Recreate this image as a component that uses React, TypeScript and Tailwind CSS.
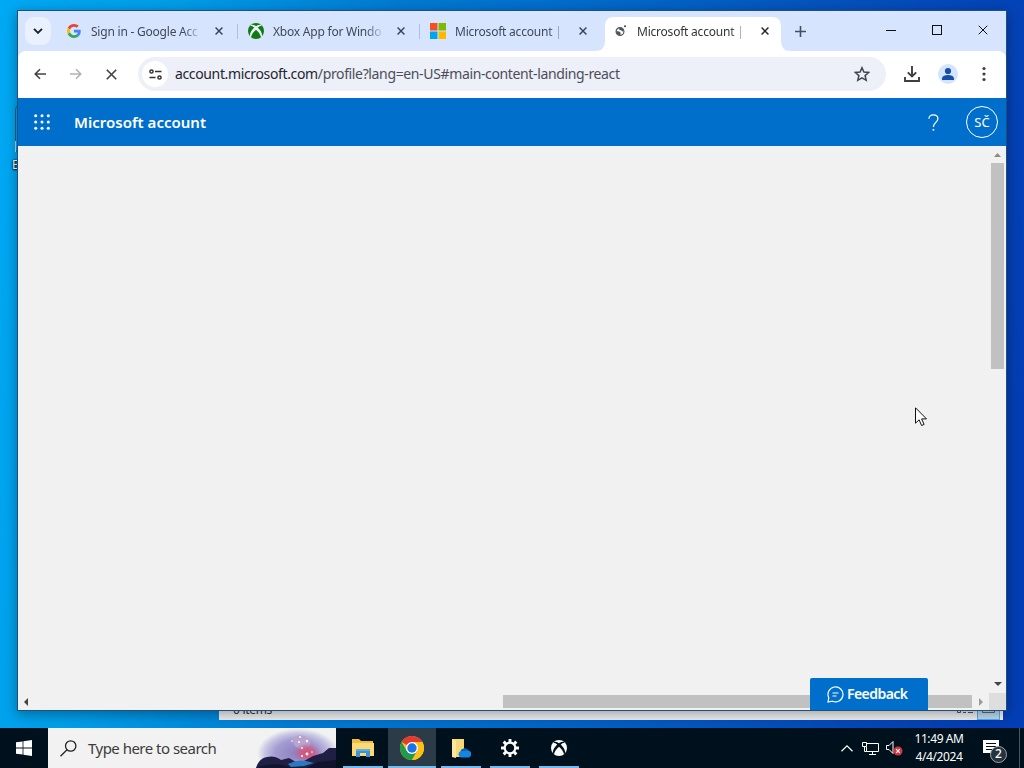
import React from "react";
import clsx from "clsx";

interface TabProps {
  title: string;
  icon: React.ReactNode;
  active?: boolean;
  separator?: boolean;
}

const GoogleIcon = () => (
  <svg width="14" height="14" viewBox="0 0 48 48">
    <path fill="#EA4335" d="M24 9.500c3.500 0 6.700 1.200 9.200 3.600l6.900-6.900C35.900 2.400 30.500 0 24 0 14.600 0 6.500 5.400 2.600 13.200l8 6.200C12.400 13.700 17.700 9.500 24 9.500z" />
    <path fill="#4285F4" d="M47 24.600c0-1.600-.2-3.100-.4-4.600H24v9h12.900c-.6 3-2.200 5.500-4.700 7.200l7.700 6C44.400 38 47 31.800 47 24.600z" />
    <path fill="#FBBC05" d="M10.500 28.600c-.5-1.500-.8-3-.8-4.600s.3-3.100.8-4.600l-8-6.200C.9 16.500 0 20.100 0 24s.9 7.500 2.600 10.800l7.900-6.200z" />
    <path fill="#34A853" d="M24 48c6.500 0 11.900-2.100 15.900-5.800l-7.700-6c-2.200 1.500-4.900 2.300-8.200 2.300-6.300 0-11.600-4.200-13.500-9.900l-7.900 6.200C6.500 42.600 14.600 48 24 48z" />
  </svg>
);

const XboxIcon = ({ size, ball, cross }: { size: number; ball: string; cross: string }) => (
  <svg width={size} height={size} viewBox="0 0 16 16">
    <circle cx="8" cy="8" r="8" fill={ball} />
    <path
      d="M3 1.800C5 1.200 6.800 2.300 8 3.200c1.200-.9 3-2 5-1.400l.8.900c-1.300-.3-2.900.8-4 1.900 2.300 2.300 4.700 5.500 4.200 8.800l-1 .9C12.600 11.500 10 8.300 8 6.700c-2 1.600-4.600 4.800-5 7.600l-1-.9c-.5-3.300 1.900-6.500 4.200-8.800-1.100-1.100-2.700-2.200-4-1.900z"
      fill={cross}
    />
  </svg>
);

const MicrosoftIcon = () => (
  <svg width="16" height="16" viewBox="0 0 16 16">
    <path fill="#f25022" d="M0 0h7.500v7.500H0z" />
    <path fill="#7fba00" d="M8.500 0H16v7.500H8.500z" />
    <path fill="#00a4ef" d="M0 8.500h7.500V16H0z" />
    <path fill="#ffb900" d="M8.500 8.500H16V16H8.500z" />
  </svg>
);

const GlobeIcon = () => (
  <svg width="16" height="16" viewBox="0 0 16 16">
    <circle cx="8" cy="8.500" r="3.900" fill="#fff" stroke="#50565c" strokeWidth="1.200" />
    <path d="M4.300 8l3 .6 1.500 1.400-.6 2.200C5.500 12 4 10.500 4.300 8zM7 4.800l3.300.2 1.500 2.700-1.700.9-1-1.300-1.700-.4z" fill="#50565c" />
    <circle cx="13" cy="3.300" r="1" fill="#3c4043" />
  </svg>
);

const Cross = ({ size, width, color }: { size: number; width: number; color: string }) => (
  <svg width={size} height={size} viewBox="0 0 10 10" stroke={color} strokeWidth={width}>
    <path d="M.7.7l8.600 8.600M9.300.7L.7 9.300" />
  </svg>
);

const Tab: React.FC<TabProps> = ({ title, icon, active, separator }) => {
  return (
    <div className="relative flex h-[34px] w-[182px] shrink-0 items-start">
      {active && (
        <svg className="absolute top-0 -left-[7px]" width="198" height="34">
          <path d="M0 34q10 0 10-10V9q0-9 9-9h158q9 0 9 9v15q0 10 10 10z" fill="#fff" />
        </svg>
      )}
      <div className="relative flex h-[28px] w-full items-center pl-[10px]">
        <span className="flex w-[16px] items-center justify-center">{icon}</span>
        <span
          className={clsx(
            "ml-[9px] w-[110px] whitespace-nowrap pt-[2px] text-[12px] tracking-[-0.22px] [mask-image:linear-gradient(to_right,black_84%,rgba(0,0,0,0.1))]",
            active ? "text-[#30343c]" : "text-[#41485a]"
          )}
        >
          {title}
        </span>
        <span className="ml-[14px]">
          <Cross size={8} width={1.800} color={active ? "#24262b" : "#3c4356"} />
        </span>
      </div>
      {separator && <span className="absolute top-[7px] right-0 h-[15px] w-px bg-[#abc0e8]" />}
    </div>
  );
};

const TabStrip = () => (
  <div className="flex h-[40px] items-start bg-[#d7e4fd] pt-[6px] pl-[7px]">
    <button className="flex h-[28px] w-[26px] items-center justify-center rounded-[9px] bg-[#e9f0fe]">
      <svg width="10" height="6" viewBox="0 0 10 6" fill="none" stroke="#1f2024" strokeWidth="1.900">
        <path d="M1 .8l4 4 4-4" />
      </svg>
    </button>
    <div className="ml-[5px] flex">
      <Tab title="Sign in - Google Acc" icon={<GoogleIcon />} separator />
      <Tab title="Xbox App for Windo" icon={<XboxIcon size={16} ball="#107c10" cross="#eef4ff" />} separator />
      <Tab title="Microsoft account | D" icon={<MicrosoftIcon />} />
      <Tab title="Microsoft account | Y" icon={<GlobeIcon />} active />
    </div>
    <svg className="mt-[9px] ml-[11px] shrink-0" width="11" height="11" stroke="#474e60" strokeWidth="1.600">
      <path d="M5.500 0v11M0 5.500h11" />
    </svg>
    <div className="mr-[18px] ml-auto flex items-start gap-[36px] pt-[8px]">
      <svg width="10" height="10" stroke="#111">
        <path d="M0 5.500h10" />
      </svg>
      <svg width="10" height="10" stroke="#111" fill="none">
        <rect x=".5" y=".5" width="9" height="9" />
      </svg>
      <Cross size={10} width={1} color="#111" />
    </div>
  </div>
);

const Toolbar = () => (
  <div className="bg-[#d7e4fd]">
    <div className="flex h-[47px] items-center rounded-t-[8px] bg-white pb-px pl-[16px]">
      <svg width="12" height="12" viewBox="0 0 13 12" fill="none" stroke="#404347" strokeWidth="1.700">
        <path d="M13 6H1.500M6.500 .8L1.300 6l5.200 5.200" />
      </svg>
      <svg className="ml-[24px]" width="12" height="12" viewBox="0 0 13 12" fill="none" stroke="#b2b2b5" strokeWidth="1.700">
        <path d="M0 6h11.500M6.500 .8L11.700 6l-5.200 5.200" />
      </svg>
      <span className="ml-[24px]">
        <Cross size={11} width={1.500} color="#404347" />
      </span>
      <div className="ml-[21px] flex h-[34px] w-[748px] items-center rounded-full bg-[#edeff9] pl-[4px]">
        <span className="flex h-[26px] w-[26px] items-center justify-center rounded-full bg-white">
          <svg width="13" height="11" viewBox="0 0 13 11" fill="none" stroke="#303338" strokeWidth="1.500">
            <circle cx="2.500" cy="2.500" r="1.600" />
            <path d="M6 2.500h6.500M.5 8.500h6" />
            <circle cx="10.500" cy="8.500" r="1.600" />
          </svg>
        </span>
        <span className="ml-[7px] whitespace-nowrap pb-px text-[14px] tracking-[-0.36px] text-[#4b4e57]">
          <span className="text-[#24262b]">account.microsoft.com</span>/profile?lang=en-US#main-content-landing-react
        </span>
        <svg className="mr-[16px] ml-auto" width="16" height="16" viewBox="0 0 16 16" fill="none" stroke="#41444a" strokeWidth="1.500">
          <path d="M8 1.700l1.900 4.400 4.800.4-3.600 3.100 1.100 4.700L8 11.800l-4.200 2.500 1.100-4.700-3.600-3.100 4.800-.4z" />
        </svg>
      </div>
      <svg className="ml-[18px]" width="16" height="16" viewBox="0 0 16 16" fill="none" stroke="#3c3f44" strokeWidth="1.900">
        <path d="M8 0v10.300M3.800 6.300L8 10.500l4.200-4.200M1 11v4h14v-4" />
      </svg>
      <svg className="ml-[18px]" width="20" height="20" viewBox="0 0 20 20">
        <circle cx="10" cy="10" r="10" fill="#d3e4fd" />
        <circle cx="10" cy="7" r="3.100" fill="#174ea6" />
        <path d="M4 16v-1.500C4 12 7.500 11 10 11s6 1 6 3.500V16z" fill="#174ea6" />
      </svg>
      <svg className="ml-[24px]" width="4" height="16" fill="#3c4043">
        <circle cx="2" cy="2.500" r="1.600" />
        <circle cx="2" cy="8" r="1.600" />
        <circle cx="2" cy="13.500" r="1.600" />
      </svg>
    </div>
  </div>
);

const AccountHeader = () => (
  <header className="flex h-[48px] items-center bg-[#006fcb] pl-[16px] text-white">
    <svg width="16" height="16" viewBox="0 0 16 16" fill="#fff">
      {[1.700, 8, 14.300].map((y) =>
        [1.700, 8, 14.300].map((x) => <circle key={`${x}-${y}`} cx={x} cy={y} r="1.500" />)
      )}
    </svg>
    <h1 className="ml-[24px] text-[15px] font-semibold tracking-[0.02px]">Microsoft account</h1>
    <svg className="ml-auto" width="11" height="17" viewBox="0 0 11 17" fill="none" stroke="#fff" strokeWidth="1.200">
      <path d="M.9 4.800C.9 2.300 2.700.8 5.300.8s4.600 1.500 4.600 3.900c0 3.500-4.500 4-4.500 8.300" />
      <path d="M4.600 15.800h1.600" strokeWidth="1.700" />
    </svg>
    <span className="mr-[8px] ml-[27px] flex h-[32px] w-[32px] items-center justify-center rounded-full border border-white pt-px text-[13px]">
      SČ
    </span>
  </header>
);

const PageBody = () => (
  <main className="relative flex h-[564px] flex-col bg-[#f1f1f1]">
    <div className="flex flex-1 justify-end">
      <div className="flex w-[17px] flex-col items-center pt-[7px]">
        <svg width="7" height="4" fill="#8b8b8b">
          <path d="M0 4L3.500 0 7 4z" />
        </svg>
        <div className="mt-[6px] h-[206px] w-[13px] bg-[#c1c1c1]" />
        <svg className="mt-auto mb-[7px]" width="8" height="4" fill="#444">
          <path d="M0 0h8L4 4z" />
        </svg>
      </div>
    </div>
    <div className="flex h-[17px] items-center pl-[6px]">
      <svg width="4" height="8" fill="#444">
        <path d="M4 0v8L0 4z" />
      </svg>
      <div className="ml-[475px] h-[13px] w-[469px] bg-[#c1c1c1]" />
      <svg className="ml-[7px]" width="4" height="8" fill="#9b9b9b">
        <path d="M0 0v8l4-4z" />
      </svg>
      <div className="ml-auto h-full w-[17px] bg-[#dedede]" />
    </div>
    <button className="absolute top-[532px] left-[792px] flex h-[32px] w-[118px] items-center rounded-t-[2px] bg-[#006fcb] pl-[17px] text-white">
      <svg width="17" height="17" viewBox="0 0 17 17" fill="none" stroke="#fff" strokeWidth="1.200">
        <path d="M1 16l.8-4.200A7.500 7.500 0 1 1 5.300 15.200z" />
        <path d="M5.500 7h6M5.500 10h4" />
      </svg>
      <span className="ml-[3px] pb-px text-[14px] font-semibold tracking-[-0.55px]">Feedback</span>
    </button>
  </main>
);

const ChromeIcon = () => (
  <svg width="24" height="24" viewBox="0 0 24 24">
    <circle cx="12" cy="12" r="12" fill="#fbc116" />
    <path d="M12 12L1.600 6a12 12 0 0 1 20.800 0z" fill="#e33b2e" />
    <path d="M1.600 6A12 12 0 0 0 12 24l5.200-9L12 12l-5.200 3z" fill="#229a4d" />
    <path d="M12 6h10.400A12 12 0 0 1 12 24l5.200-9z" fill="#fbc116" />
    <circle cx="12" cy="12" r="6" fill="#fff" />
    <circle cx="12" cy="12" r="4.700" fill="#1a73e8" />
  </svg>
);

const ExplorerIcon = () => (
  <svg width="22" height="20" viewBox="0 0 22 20">
    <path d="M0 1h7l2 2h12v15H0z" fill="#f1bd40" />
    <path d="M0 5h22v13H0z" fill="#fcd975" />
    <path d="M4 11h14v8h-4v-4H8v4H4z" fill="#3c94d6" />
    <path d="M4 11h14v2H4z" fill="#5bb1e6" />
  </svg>
);

const OneDriveFolderIcon = () => (
  <svg width="20" height="20" viewBox="0 0 20 20">
    <path d="M1 1h12v18H1z" fill="#f8d775" />
    <path d="M1 1l4 2v17l-4-1z" fill="#fbe7a1" />
    <path d="M10 19.500a3.300 3.300 0 0 1-.6-6.200 4.600 4.600 0 0 1 8-.8 3.600 3.600 0 0 1 .2 7z" fill="#1685df" />
    <path d="M9.400 13.300a4.600 4.600 0 0 1 8-.8z" fill="#0a61b5" />
  </svg>
);

const GearIcon = () => (
  <svg width="18" height="18" viewBox="0 0 18 18" fill="none" stroke="#fff">
    <circle cx="9" cy="9" r="5.300" strokeWidth="2.200" />
    {[0, 45, 90, 135, 180, 225, 270, 315].map((angle) => (
      <path key={angle} d="M9 0v3.500" strokeWidth="2.900" transform={`rotate(${angle} 9 9)`} />
    ))}
  </svg>
);

const apps = [
  { name: "explorer", icon: <ExplorerIcon /> },
  { name: "chrome", icon: <ChromeIcon />, active: true },
  { name: "onedrive", icon: <OneDriveFolderIcon /> },
  { name: "settings", icon: <GearIcon /> },
  { name: "xbox", icon: <XboxIcon size={16} ball="#fff" cross="#00121e" /> },
];

const SearchArt = () => (
  <svg width="80" height="40" viewBox="0 0 80 40">
    <defs>
      <radialGradient id="glow" cx="50%" cy="55%" r="50%">
        <stop offset="0" stopColor="#8a7fc0" />
        <stop offset=".55" stopColor="#a39bd0" />
        <stop offset=".8" stopColor="#c6c4e2" />
        <stop offset="1" stopColor="#f2f2f2" />
      </radialGradient>
      <radialGradient id="nebula">
        <stop offset="0" stopColor="#dc4f6c" />
        <stop offset=".6" stopColor="#c8608c" stopOpacity=".8" />
        <stop offset="1" stopColor="#b070b0" stopOpacity="0" />
      </radialGradient>
    </defs>
    <ellipse cx="42" cy="23" rx="41" ry="25" fill="url(#glow)" />
    <path d="M38 9q8-4 14 1 4 4 1 9l-8 3-6-4q-3-4-1-9z" fill="#b9a3cf" />
    <ellipse cx="51" cy="25" rx="14" ry="10" fill="url(#nebula)" />
    <path d="M0 40q3-10 11-11 8-2 14 3l8-2 7 4 8-1 9-5 10-3 6-5h7v20z" fill="#1f1f44" />
    <path d="M32 36q9-5 18-3l8 2-10 3-13 1z" fill="#2a78c0" />
    <path d="M0 40q18-7 34-1l16 1 12-6 18-2v8z" fill="#11132c" />
    <g fill="#fff">
      <circle cx="44" cy="9" r=".9" />
      <circle cx="51" cy="13" r="1.200" />
      <circle cx="43" cy="14" r="1" />
      <circle cx="36" cy="13" r=".8" />
      <circle cx="46" cy="20" r=".9" />
      <circle cx="51" cy="26" r="1.400" />
      <circle cx="56" cy="24" r=".8" />
      <circle cx="46" cy="28" r="1" />
    </g>
  </svg>
);

const Taskbar = () => (
  <footer className="absolute bottom-0 left-0 flex h-[40px] w-full bg-[#00111e] text-white">
    <button className="flex w-[48px] items-center justify-center">
      <svg width="16" height="16" viewBox="0 0 16 16" fill="#fff">
        <path d="M0 2.300l6.600-.9v6.200H0zM7.400 1.200L16 0v7.600H7.400zM0 8.400h6.600v6.200L0 13.700zM7.400 8.400H16V16l-8.600-1.200z" />
      </svg>
    </button>
    <div className="flex w-[288px] items-center bg-[#f2f2f2] pl-[12px] text-[#3c3c3c]">
      <svg width="17" height="17" viewBox="0 0 17 17" fill="none" stroke="#222" strokeWidth="1.300">
        <circle cx="10.700" cy="6" r="5.200" />
        <path d="M7 9.700L.5 16.200" />
      </svg>
      <span className="ml-[11px] whitespace-nowrap text-[15px] tracking-[-0.52px]">Type here to search</span>
      <div className="ml-auto">
        <SearchArt />
      </div>
    </div>
    <div className="ml-[3px] flex gap-px">
      {apps.map((app) => (
        <div
          key={app.name}
          className={clsx("flex w-[48px] flex-col items-center", app.active && "bg-[#2b3c48]")}
        >
          <span className="flex flex-1 items-center pt-[2px]">{app.icon}</span>
          <span className={clsx("h-[2px] bg-[#76b9ed]", app.active ? "w-full" : "w-[40px]")} />
        </div>
      ))}
    </div>
    <div className="ml-auto flex items-center">
      <svg width="12" height="7" viewBox="0 0 12 7" fill="none" stroke="#fff" strokeWidth="1.200">
        <path d="M.5 6.300L6 .9l5.500 5.400" />
      </svg>
      <svg className="ml-[9px]" width="17" height="15" viewBox="0 0 17 15" fill="none" stroke="#fff">
        <path d="M5 2.500h11.500v8H4.500V6M10.500 10.500v3M7 13.500h7" />
        <path d="M.5 1.500h4v4h-4zM2.500 5.500v5h2" />
      </svg>
      <svg className="ml-[7px]" width="17" height="16" viewBox="0 0 17 16" fill="none" stroke="#fff">
        <path d="M.5 5.500H3l4-4v12l-4-4H.5z" />
        <circle cx="12" cy="11" r="4.500" fill="#d8343c" stroke="none" />
        <path d="M10.200 9.200l3.600 3.600m0-3.600l-3.600 3.600" strokeWidth="1.200" />
      </svg>
      <div className="ml-[6px] w-[60px] text-center text-[12px] leading-[18px] tracking-[-0.4px] whitespace-nowrap">
        <div>11:49 AM</div>
        <div>4/4/2024</div>
      </div>
      <div className="relative ml-[14px] h-[17px] w-[16px]">
        <svg width="16" height="17" viewBox="0 0 16 17">
          <path d="M0 0h16v13h-5v4l-4-4H0z" fill="#fff" />
          <path d="M3 3.500h10M3 6.500h10M3 9.500h6" stroke="#00111e" />
        </svg>
        <span className="absolute top-[6px] left-[7px] flex h-[17px] w-[17px] items-center justify-center rounded-full border border-[#9da3a8] bg-[#27333c] text-[12px] font-medium">
          2
        </span>
      </div>
      <span className="ml-[20px] h-[40px] w-px bg-[#4b5862]" />
      <span className="w-[4px]" />
    </div>
  </footer>
);

const App: React.FC = () => {
  return (
    <div className="relative h-[768px] w-[1024px] overflow-hidden bg-[linear-gradient(98deg,#00a9f4_0%,#009ee8_15%,#007bd3_35%,#006dcb_50%,#0454bd_72%,#043eb5_95%)] font-['Noto_Sans','Open_Sans',sans-serif]">
      <div className="absolute top-[104px] left-[15px] h-[50px] w-[12px] rounded-[6px] border-l border-[#17618b]" />
      <div className="absolute top-[141px] left-[15px] h-[11px] w-[5px] border-l border-white/70" />
      <span className="absolute top-[157px] left-[12px] text-[12px] leading-[16px] text-white [text-shadow:0_1px_2px_black,0_0_2px_black]">E</span>

      {/* explorer window behind the browser */}
      <div className="absolute top-[690px] left-[219px] flex h-[30px] w-[784px] items-center justify-between bg-[#f0f1f2] pl-[14px] text-[12px] text-[#333]">
        <span className="mt-[9px] tracking-[-0.3px]">0 items</span>
        <div className="flex h-full items-end pr-[3px]">
          <svg className="mb-[6px]" width="16" height="5" fill="none" stroke="#555">
            <path d="M.5 0v3.500h3V0M6 3.500h3M11 3.500h5" />
          </svg>
          <div className="ml-[4px] flex h-[30px] w-[23px] items-end justify-center border border-[#5eacdf] bg-[#bcdcf4] pb-[5px]">
            <svg width="13" height="5" fill="none" stroke="#666">
              <path d="M.5 0v3.500h12V0" />
            </svg>
          </div>
        </div>
      </div>

      <div className="absolute top-[10px] left-[17px] w-[990px] border border-[#1d5080] shadow-[0_3px_12px_rgba(0,0,0,0.35)]">
        <TabStrip />
        <Toolbar />
        <AccountHeader />
        <PageBody />
      </div>

      <Taskbar />

      <svg className="absolute top-[407px] left-[915px]" width="13" height="20" viewBox="0 0 13 20">
        <path d="M.5.8v15.400l3.600-3.400 2.500 5.700 2.500-1.100-2.500-5.500h4.900z" fill="#fff" stroke="#111" />
      </svg>
    </div>
  );
};

export default App;
